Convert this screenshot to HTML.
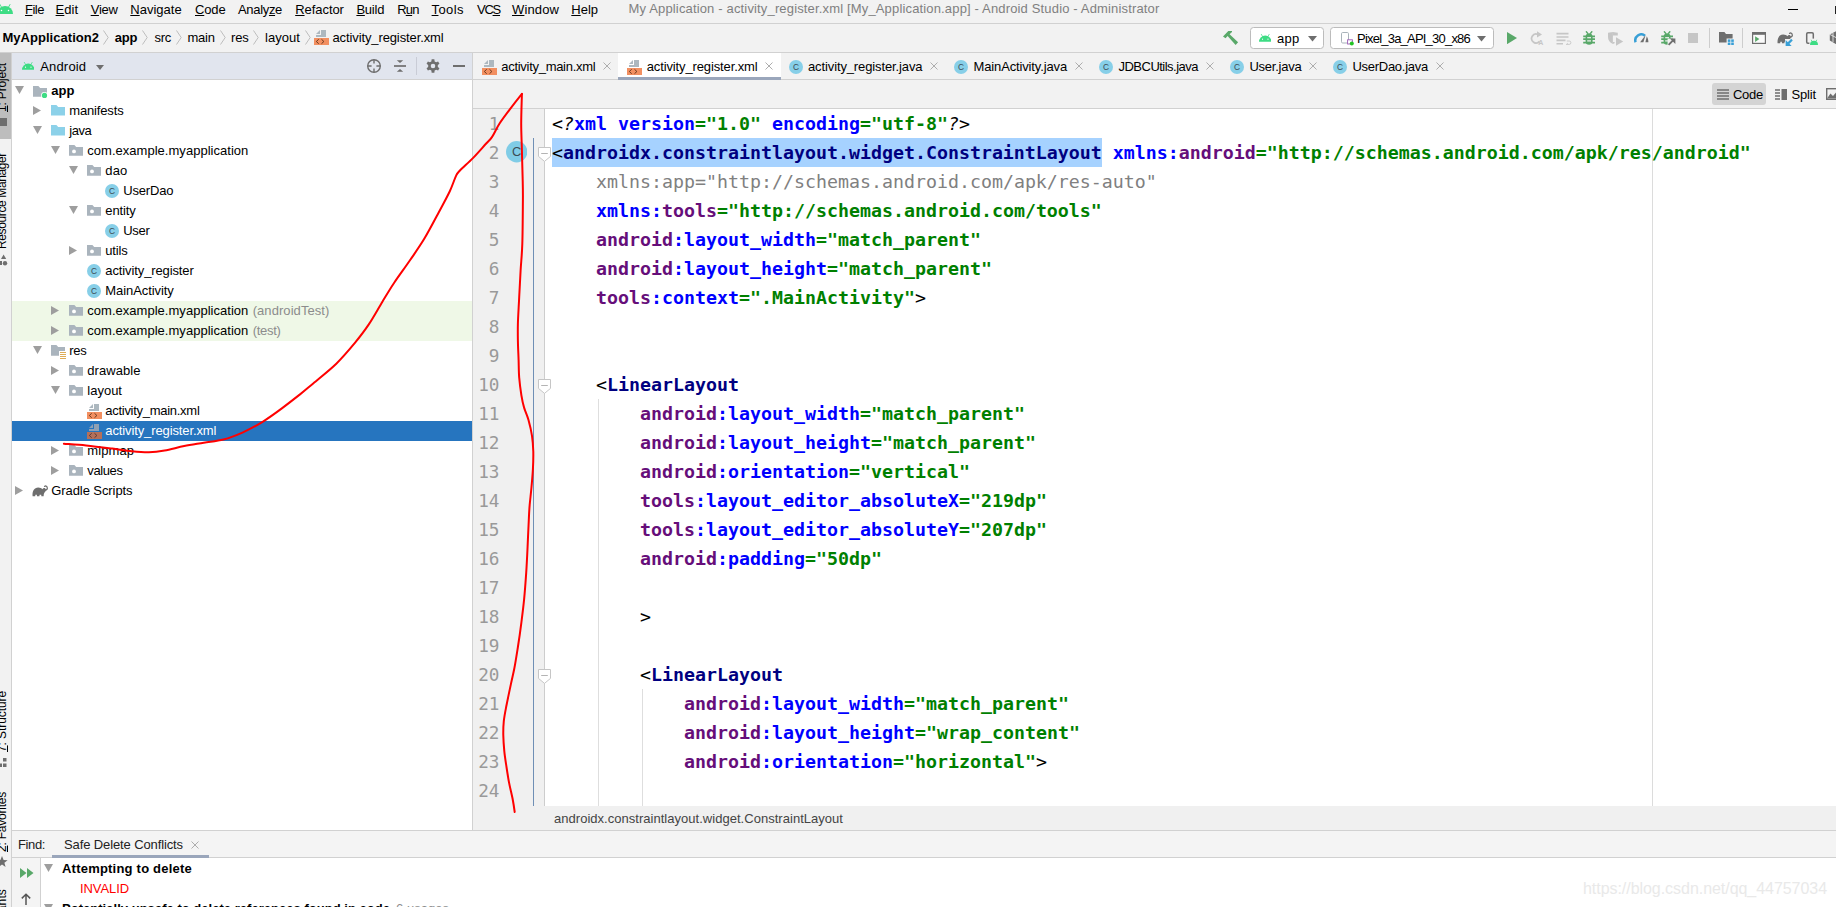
<!DOCTYPE html>
<html lang="en"><head><meta charset="utf-8"><title>Android Studio - activity_register.xml</title>
<style>
html,body{margin:0;padding:0;background:#fff;}
body{width:1836px;height:907px;overflow:hidden;}
#app{position:relative;width:1836px;height:907px;overflow:hidden;background:#fff;font-family:"Liberation Sans",sans-serif;font-size:13px;color:#000;}
#app>div,#app>svg,#app>span{position:absolute;}
.t{height:20px;line-height:20px;white-space:nowrap;}
u{text-decoration:underline;text-underline-offset:1px;}
.code{font-family:"DejaVu Sans Mono","Liberation Mono",monospace;font-size:18.27px;line-height:29px;height:29px;white-space:pre;left:552px;}
.code b{font-weight:bold;}
.ln{font-family:"DejaVu Sans Mono","Liberation Mono",monospace;font-size:17.7px;line-height:29px;height:29px;color:#999;width:26.5px;left:473px;text-align:right;margin-top:1px;}
.tn{color:#000080}.ns{color:#660e7a}.an{color:#0000ff}.sv{color:#008000}.gy{color:#808080;font-weight:normal}

</style></head>
<body>
<div id="app">
<div style="left:0px;top:0px;width:1836px;height:907px;background:#fff;"></div>
<div style="left:0px;top:0px;width:1836px;height:23px;background:#f2f2f2;"></div>
<div style="left:0px;top:23px;width:1836px;height:1px;background:#d1d1d1;"></div>
<div style="left:0px;top:24px;width:1836px;height:28px;background:#f2f2f2;"></div>
<div style="left:0px;top:52px;width:1836px;height:1px;background:#d1d1d1;"></div>
<div style="left:0px;top:53px;width:11px;height:854px;background:#f2f2f2;"></div>
<div style="left:0px;top:53px;width:11px;height:86px;background:#bdbdbd;"></div>
<div style="left:11px;top:53px;width:1px;height:854px;background:#d1d1d1;"></div>
<div style="left:12px;top:53px;width:460px;height:26px;background:#e1e5ee;"></div>
<div style="left:12px;top:79px;width:460px;height:1px;background:#d1d1d1;"></div>
<div style="left:472px;top:53px;width:1px;height:777px;background:#d1d1d1;"></div>
<div style="left:473px;top:53px;width:1363px;height:26px;background:#f2f2f2;"></div>
<div style="left:473px;top:79px;width:1363px;height:1px;background:#d1d1d1;"></div>
<div style="left:618px;top:53px;width:163px;height:26px;background:#fff;"></div>
<div style="left:618px;top:77px;width:163px;height:3px;background:#9aa6bb;"></div>
<div style="left:473px;top:80px;width:1363px;height:28px;background:#f2f2f2;"></div>
<div style="left:473px;top:108px;width:1363px;height:1px;background:#d1d1d1;"></div>
<div style="left:1712px;top:83px;width:54px;height:22px;background:#d4d4d4;border-radius:3px;"></div>
<div style="left:473px;top:109px;width:71px;height:697px;background:#f0f0f0;"></div>
<div style="left:533px;top:138px;width:1px;height:668px;background:#6f8fb5;"></div>
<div style="left:1652px;top:109px;width:1px;height:697px;background:#dcdcdc;"></div>
<div style="left:598px;top:399px;width:1px;height:407px;background:#dedede;"></div>
<div style="left:642px;top:689px;width:1px;height:117px;background:#dedede;"></div>
<div style="left:552px;top:138px;width:550px;height:29px;background:#a6d2ff;"></div>
<div style="left:473px;top:806px;width:1363px;height:24px;background:#f0f0f0;"></div>
<div style="left:12px;top:830px;width:1824px;height:1px;background:#d1d1d1;"></div>
<div style="left:12px;top:831px;width:1824px;height:26px;background:#f4f4f4;"></div>
<div style="left:12px;top:857px;width:1824px;height:1px;background:#d1d1d1;"></div>
<div style="left:52px;top:855px;width:157px;height:3px;background:#9aa6bb;"></div>
<div style="left:12px;top:858px;width:28px;height:49px;background:#f4f4f4;"></div>
<div style="left:40px;top:858px;width:1px;height:49px;background:#d1d1d1;"></div>
<div style="left:12px;top:301px;width:460px;height:40px;background:#eff8e7;"></div>
<div style="left:12px;top:421px;width:460px;height:20px;background:#2675bf;"></div>
<svg style="left:-3px;top:4.2px;" width="16" height="10.0" viewBox="0 0 16 10"><path d="M0 10 A8 8 0 0 1 16 10 Z" fill="#3ddc84"/><path d="M4.6 3.3 L3 0.5 M11.4 3.3 L13 0.5" stroke="#3ddc84" stroke-width="0.9" stroke-linecap="round" fill="none"/><circle cx="4.5" cy="6.6" r="0.75" fill="#fff"/><circle cx="11.5" cy="6.6" r="0.75" fill="#fff"/></svg>
<div style="left:1788px;top:9px;width:10px;height:1px;background:#000;"></div>
<div style="left:1834.5px;top:6px;width:1.5px;height:8px;background:#222;"></div>
<svg style="left:103px;top:30px;" width="6" height="15" viewBox="0 0 6 15"><path d="M0.5 0.5 L5.2 7.5 L0.5 14.5" stroke="#bdbdbd" stroke-width="1" fill="none"/></svg>
<svg style="left:142px;top:30px;" width="6" height="15" viewBox="0 0 6 15"><path d="M0.5 0.5 L5.2 7.5 L0.5 14.5" stroke="#bdbdbd" stroke-width="1" fill="none"/></svg>
<svg style="left:175.5px;top:30px;" width="6" height="15" viewBox="0 0 6 15"><path d="M0.5 0.5 L5.2 7.5 L0.5 14.5" stroke="#bdbdbd" stroke-width="1" fill="none"/></svg>
<svg style="left:219.5px;top:30px;" width="6" height="15" viewBox="0 0 6 15"><path d="M0.5 0.5 L5.2 7.5 L0.5 14.5" stroke="#bdbdbd" stroke-width="1" fill="none"/></svg>
<svg style="left:253px;top:30px;" width="6" height="15" viewBox="0 0 6 15"><path d="M0.5 0.5 L5.2 7.5 L0.5 14.5" stroke="#bdbdbd" stroke-width="1" fill="none"/></svg>
<svg style="left:304.5px;top:30px;" width="6" height="15" viewBox="0 0 6 15"><path d="M0.5 0.5 L5.2 7.5 L0.5 14.5" stroke="#bdbdbd" stroke-width="1" fill="none"/></svg>
<svg style="left:314px;top:30px;" width="15" height="15" viewBox="0 0 15 15"><path d="M7 0 H12 V7 H2 V5 H7 Z" fill="#adb8bf"/><path d="M2 4 L6 0 V4 Z" fill="#adb8bf"/><rect x="0" y="8" width="15" height="7" fill="#f28f60"/><path d="M4.7 9.3 L2.3 11.5 L4.7 13.7 M7.5 9.3 L9.9 11.5 L7.5 13.7" stroke="#6b3a20" stroke-width="1" fill="none"/></svg>
<svg style="left:1222px;top:30px;" width="18" height="16" viewBox="0 0 18 16"><path d="M1 6.5 L6.3 1.1 H10 V1.9 L7.6 4.2 L16.1 12.3 L13.6 15 L5.6 6.1 L3.5 8.3 Z" fill="#59a869"/></svg>
<div style="left:1250px;top:27px;width:72px;height:20px;background:#fff;border:1px solid #bcbcbc;border-radius:3.5px;"></div>
<svg style="left:1258.8px;top:34.2px;" width="12.5" height="7.81" viewBox="0 0 16 10"><path d="M0 10 A8 8 0 0 1 16 10 Z" fill="#3ddc84"/><path d="M4.6 3.3 L3 0.5 M11.4 3.3 L13 0.5" stroke="#3ddc84" stroke-width="0.9" stroke-linecap="round" fill="none"/><circle cx="4.5" cy="6.6" r="0.75" fill="#fff"/><circle cx="11.5" cy="6.6" r="0.75" fill="#fff"/></svg>
<svg style="left:1308px;top:36px;" width="9" height="6" viewBox="0 0 9 6"><path d="M0 0 H9 L4.5 5.6 Z" fill="#6e6e6e"/></svg>
<div style="left:1330px;top:27px;width:162px;height:20px;background:#fff;border:1px solid #bcbcbc;border-radius:3.5px;"></div>
<svg style="left:1341px;top:32px;" width="13" height="14" viewBox="0 0 13 14"><rect x="0.5" y="0.5" width="7" height="10.5" rx="1.2" fill="#fff" stroke="#a9b3ba" stroke-width="1"/><rect x="6.6" y="7.8" width="4.8" height="4.2" fill="#fff" stroke="#9b59b6" stroke-width="0.9"/><circle cx="10.8" cy="11.4" r="2" fill="#22c322"/></svg>
<svg style="left:1477px;top:36px;" width="9" height="6" viewBox="0 0 9 6"><path d="M0 0 H9 L4.5 5.6 Z" fill="#6e6e6e"/></svg>
<svg style="left:1507px;top:32px;" width="10" height="12" viewBox="0 0 10 12"><path d="M0 0 L10 6.1 L0 12.2 Z" fill="#59a869"/></svg>
<svg style="left:1530px;top:31px;" width="14" height="14" viewBox="0 0 14 14"><path d="M8 3.4 A4.5 4.5 0 1 0 9.6 10.4" stroke="#c6c6c6" stroke-width="1.7" fill="none"/><path d="M7 0.2 L12 3.4 L7 6.6 Z" fill="#c6c6c6"/><text x="8.2" y="13.8" font-family="Liberation Sans, sans-serif" font-size="7" font-weight="bold" fill="#c6c6c6">A</text></svg>
<svg style="left:1556px;top:32px;" width="16" height="13" viewBox="0 0 16 13"><path d="M0.5 1.6 H12.5 M0.5 5 H12.5 M0.5 8.4 H9.5 M0.5 11.8 H7" stroke="#c6c6c6" stroke-width="1.6"/><path d="M10.8 9 H13.2 A1.7 1.7 0 0 1 13.2 12.4 H10.6 M11.8 11.2 L10.4 12.4 L11.8 13.6" stroke="#c6c6c6" stroke-width="0.9" fill="none"/></svg>
<svg style="left:1583px;top:31px;" width="13" height="14" viewBox="0 0 13 14"><path d="M2.6 6 C2.6 3.3 4 2.2 6.1 2.2 C8.2 2.2 9.6 3.3 9.6 6 V10.2 A3.5 3.5 0 0 1 2.6 10.2 Z" fill="#59a869"/><path d="M3 0.3 L5 2.8 M9.2 0.3 L7.2 2.8" stroke="#59a869" stroke-width="1.4" fill="none"/><path d="M0.2 5.3 H12 M0.2 8.2 H12 M0.2 11.6 H12" stroke="#59a869" stroke-width="1.7" fill="none"/><rect x="4.2" y="6.1" width="3.8" height="1.2" fill="#f2f2f2"/><rect x="4.2" y="9.3" width="3.8" height="1.2" fill="#f2f2f2"/></svg>
<svg style="left:1608px;top:32px;" width="16" height="15" viewBox="0 0 16 15"><path d="M0 0.8 L4.9 0 V12 C1.6 10.4 0 8 0 5 Z" fill="#c6c6c6"/><path d="M4.9 0 L9.8 0.8 V3.4 H4.9 Z" fill="#c6c6c6"/><path d="M4.9 10 H6.6 V11.2 L4.9 12 Z" fill="#c6c6c6"/><path d="M8 5.2 L15.2 9.5 L8 13.8 Z" fill="#c6c6c6"/></svg>
<svg style="left:1633.7px;top:32.6px;" width="15" height="10" viewBox="0 0 15 10"><path d="M1.59 9.25 A6 6 0 0 1 10.99 2.67" stroke="#389fd6" stroke-width="2.5" fill="none"/><path d="M6.1 9.3 L11.6 1.9 L9.4 9.3 Z" fill="#6e6e6e"/><path d="M12.8 3.2 C13.8 5 14.4 7 14.4 9.3 H11.4 C11.8 7.4 12.2 5.4 12.8 3.2 Z" fill="#6e6e6e"/></svg>
<svg style="left:1661px;top:31px;" width="16" height="15" viewBox="0 0 16 15"><path d="M2.6 6 C2.6 3.3 4 2.2 6.1 2.2 C8.2 2.2 9.6 3.3 9.6 6 V10.2 A3.5 3.5 0 0 1 2.6 10.2 Z" fill="#59a869"/><path d="M3 0.3 L5 2.8 M9.2 0.3 L7.2 2.8" stroke="#59a869" stroke-width="1.4" fill="none"/><path d="M0.2 5.3 H12 M0.2 8.2 H12 M0.2 11.6 H12" stroke="#59a869" stroke-width="1.7" fill="none"/><rect x="4.2" y="6.1" width="3.8" height="1.2" fill="#f2f2f2"/><rect x="4.2" y="9.3" width="3.8" height="1.2" fill="#f2f2f2"/><rect x="6.6" y="7.6" width="9" height="8" fill="#f2f2f2"/><path d="M7.6 13.8 L13 8.4" stroke="#6e6e6e" stroke-width="1.9" fill="none"/><path d="M8.8 7.4 H14.4 V13 Z" fill="#6e6e6e"/></svg>
<div style="left:1688px;top:33px;width:10px;height:10px;background:#c6c6c6;"></div>
<div style="left:1709px;top:28px;width:1px;height:20px;background:#cdcdcd;"></div>
<svg style="left:1719px;top:32px;" width="15" height="13" viewBox="0 0 15 13"><path d="M0 0 H5.4 L7 2 H13.6 V6.4 H7.6 V10.4 H0 Z" fill="#6e6e6e"/><rect x="8.8" y="7.4" width="2.6" height="2.5" fill="#389fd6"/><rect x="12.2" y="7.4" width="2.6" height="2.5" fill="#389fd6"/><rect x="8.8" y="10.5" width="2.6" height="2.5" fill="#389fd6"/><rect x="12.2" y="10.5" width="2.6" height="2.5" fill="#389fd6"/></svg>
<div style="left:1742px;top:28px;width:1px;height:20px;background:#cdcdcd;"></div>
<svg style="left:1752px;top:32px;" width="14" height="12" viewBox="0 0 14 12"><rect x="0.6" y="0.6" width="12.8" height="10.8" fill="#fafafa" stroke="#6e6e6e" stroke-width="1.2"/><rect x="0" y="0" width="14" height="2.8" fill="#6e6e6e"/><path d="M3.1 4.2 L7.4 7.1 L3.1 10 Z" fill="#59a869"/></svg>
<svg style="left:1777.4px;top:32px;" width="16" height="14" viewBox="0 0 16 14"><path d="M0.6 11.3 C0 6.5 2.2 2.6 6.2 2.6 C8.2 2.6 9.6 3.4 10.4 4.2 C11 3.2 12.2 2.8 13.2 3.4 C14.2 4 14.2 5.6 13.4 6.6 C12.6 7.6 12 8.2 11.8 9.2 L11.6 11.3 H9.4 L9.2 9.8 H7.6 L7.4 11.3 H5 L4.8 9.8 H3.4 L3.2 11.3 Z" fill="#6e6e6e"/><path d="M13 5 C14.6 5.4 15.6 4 15.2 2.4 C14.9 1 13.4 0.6 12.6 1.4" stroke="#6e6e6e" stroke-width="1.3" fill="none" stroke-linecap="round"/><rect x="8" y="7" width="8" height="7" fill="#f2f2f2"/><path d="M8.6 14 V8 L14.6 14 Z" fill="#389fd6"/><path d="M15 7.6 L11 11.6" stroke="#389fd6" stroke-width="2.2" fill="none"/></svg>
<svg style="left:1805px;top:31px;" width="14" height="14" viewBox="0 0 14 14"><rect x="1.7" y="1.7" width="6.6" height="10.6" rx="1.2" fill="none" stroke="#6e6e6e" stroke-width="1.5"/><rect x="4.4" y="7.6" width="9.6" height="6.4" fill="#f2f2f2"/><path d="M5 13.9 A4 4.2 0 0 1 13 13.9 Z" fill="#3ddc84"/><path d="M7 10.4 L6.2 8.8 M11 10.4 L11.8 8.8" stroke="#3ddc84" stroke-width="0.8"/></svg>
<svg style="left:1829px;top:31px;" width="8" height="13" viewBox="0 0 8 13"><path d="M0.8 3.4 L7.5 0 V13.4 L0.8 9.6 Z" fill="#6e6e6e"/><path d="M0.8 3.4 L7.5 6.8 M4 2 V11" stroke="#f2f2f2" stroke-width="0.8"/></svg>
<div style="left:0px;top:118px;width:7px;height:8px;background:#6e6e6e;"></div>
<svg style="left:0px;top:254px;" width="8" height="12" viewBox="0 0 8 12"><path d="M1 5 L3.6 0.5 L6.2 5 Z" fill="#6e6e6e"/><rect x="-2" y="7" width="4" height="4" fill="#6e6e6e"/><circle cx="5" cy="9.2" r="2.2" fill="#6e6e6e"/></svg>
<svg style="left:0px;top:758px;" width="7" height="10" viewBox="0 0 7 10"><rect x="3" y="0" width="3.5" height="3.5" fill="#6e6e6e"/><rect x="-1" y="5.5" width="3" height="3.5" fill="#6e6e6e"/><rect x="3" y="5.5" width="3.5" height="3.5" fill="#6e6e6e"/></svg>
<svg style="left:0px;top:856px;" width="8" height="12" viewBox="0 0 8 12"><path d="M2 0 L3.6 4 L7.6 4.2 L4.4 6.8 L5.6 11 L2 8.6 L-1.6 11 L-0.4 6.8 L-3.6 4.2 L0.4 4 Z" fill="#6e6e6e"/></svg>
<svg style="left:21.8px;top:62px;" width="12.5" height="7.81" viewBox="0 0 16 10"><path d="M0 10 A8 8 0 0 1 16 10 Z" fill="#3ddc84"/><path d="M4.6 3.3 L3 0.5 M11.4 3.3 L13 0.5" stroke="#3ddc84" stroke-width="0.9" stroke-linecap="round" fill="none"/><circle cx="4.5" cy="6.6" r="0.75" fill="#fff"/><circle cx="11.5" cy="6.6" r="0.75" fill="#fff"/></svg>
<svg style="left:96px;top:65px;" width="8" height="5" viewBox="0 0 8 5"><path d="M0 0 H8 L4 5 Z" fill="#6e6e6e"/></svg>
<svg style="left:367px;top:59px;" width="14" height="14" viewBox="0 0 14 14"><circle cx="7" cy="7" r="6.3" fill="none" stroke="#6e6e6e" stroke-width="1.4"/><path d="M7 0.7 V4.6 M7 9.4 V13.3 M0.7 7 H4.6 M9.4 7 H13.3" stroke="#6e6e6e" stroke-width="1.4"/></svg>
<svg style="left:394px;top:60px;" width="12" height="12" viewBox="0 0 12 12"><path d="M0 6 H12" stroke="#6e6e6e" stroke-width="1.7"/><path d="M2.8 0.2 H9.2 L6 3 Z M2.8 11.8 H9.2 L6 9 Z" fill="#6e6e6e"/></svg>
<div style="left:416px;top:57px;width:1px;height:18px;background:#c9ccd6;"></div>
<svg style="left:426px;top:59px;" width="14" height="14" viewBox="0 0 14 14"><path d="M5.37 2.38 L5.65 0.34 L8.35 0.34 L8.63 2.38 L10.18 3.28 L12.10 2.50 L13.45 4.84 L11.82 6.11 L11.82 7.89 L13.45 9.16 L12.10 11.50 L10.18 10.72 L8.63 11.62 L8.35 13.66 L5.65 13.66 L5.37 11.62 L3.82 10.72 L1.90 11.50 L0.55 9.16 L2.18 7.89 L2.18 6.11 L0.55 4.84 L1.90 2.50 L3.82 3.28 Z M4.7 7 A2.3 2.3 0 1 0 9.3 7 A2.3 2.3 0 1 0 4.7 7 Z" fill="#6e6e6e" fill-rule="evenodd"/></svg>
<div style="left:453px;top:65px;width:12px;height:2px;background:#6e6e6e;"></div>
<svg style="left:15px;top:86.0px;" width="9" height="8" viewBox="0 0 9 8"><path d="M0 0 H9 L4.5 8 Z" fill="#9e9e9e"/></svg>
<svg style="left:33px;top:86.0px;" width="16" height="14" viewBox="0 0 16 14"><path d="M0 0 H5.4 L7.2 2 H14 V10.8 H0 Z" fill="#aab4bd"/><circle cx="11.5" cy="9.4" r="3.4" fill="#fff"/><circle cx="11.5" cy="9.4" r="2.6" fill="#3ddc84"/></svg>
<svg style="left:33px;top:106.0px;" width="8" height="9" viewBox="0 0 8 9"><path d="M0 0 V9 L8 4.5 Z" fill="#9e9e9e"/></svg>
<svg style="left:51px;top:105.2px;" width="14" height="11" viewBox="0 0 14 11"><path d="M0 0 H5.4 L7.2 2 H14 V10.6 H0 Z" fill="#8cd1e9"/></svg>
<svg style="left:33px;top:126.0px;" width="9" height="8" viewBox="0 0 9 8"><path d="M0 0 H9 L4.5 8 Z" fill="#9e9e9e"/></svg>
<svg style="left:51px;top:125.2px;" width="14" height="11" viewBox="0 0 14 11"><path d="M0 0 H5.4 L7.2 2 H14 V10.6 H0 Z" fill="#8cd1e9"/></svg>
<svg style="left:51px;top:146.0px;" width="9" height="8" viewBox="0 0 9 8"><path d="M0 0 H9 L4.5 8 Z" fill="#9e9e9e"/></svg>
<svg style="left:69px;top:145.1px;" width="14" height="11" viewBox="0 0 14 11"><path d="M0 0 H5.4 L7.2 2 H14 V10.8 H0 Z" fill="#aab4bd"/><circle cx="5" cy="6.4" r="1.9" fill="#fff"/></svg>
<svg style="left:69px;top:166.0px;" width="9" height="8" viewBox="0 0 9 8"><path d="M0 0 H9 L4.5 8 Z" fill="#9e9e9e"/></svg>
<svg style="left:87px;top:165.1px;" width="14" height="11" viewBox="0 0 14 11"><path d="M0 0 H5.4 L7.2 2 H14 V10.8 H0 Z" fill="#aab4bd"/><circle cx="5" cy="6.4" r="1.9" fill="#fff"/></svg>
<svg style="left:105.0px;top:183.5px;" width="14" height="14" viewBox="0 0 14 14"><circle cx="7.0" cy="7.0" r="7.0" fill="#87cfe8"/><text x="7.0" y="10.02" text-anchor="middle" font-family="Liberation Sans, sans-serif" font-size="8.4" fill="#3c4c55">C</text></svg>
<svg style="left:69px;top:206.0px;" width="9" height="8" viewBox="0 0 9 8"><path d="M0 0 H9 L4.5 8 Z" fill="#9e9e9e"/></svg>
<svg style="left:87px;top:205.1px;" width="14" height="11" viewBox="0 0 14 11"><path d="M0 0 H5.4 L7.2 2 H14 V10.8 H0 Z" fill="#aab4bd"/><circle cx="5" cy="6.4" r="1.9" fill="#fff"/></svg>
<svg style="left:105.0px;top:223.5px;" width="14" height="14" viewBox="0 0 14 14"><circle cx="7.0" cy="7.0" r="7.0" fill="#87cfe8"/><text x="7.0" y="10.02" text-anchor="middle" font-family="Liberation Sans, sans-serif" font-size="8.4" fill="#3c4c55">C</text></svg>
<svg style="left:69px;top:246.0px;" width="8" height="9" viewBox="0 0 8 9"><path d="M0 0 V9 L8 4.5 Z" fill="#9e9e9e"/></svg>
<svg style="left:87px;top:245.1px;" width="14" height="11" viewBox="0 0 14 11"><path d="M0 0 H5.4 L7.2 2 H14 V10.8 H0 Z" fill="#aab4bd"/><circle cx="5" cy="6.4" r="1.9" fill="#fff"/></svg>
<svg style="left:87.0px;top:263.5px;" width="14" height="14" viewBox="0 0 14 14"><circle cx="7.0" cy="7.0" r="7.0" fill="#87cfe8"/><text x="7.0" y="10.02" text-anchor="middle" font-family="Liberation Sans, sans-serif" font-size="8.4" fill="#3c4c55">C</text></svg>
<svg style="left:87.0px;top:283.5px;" width="14" height="14" viewBox="0 0 14 14"><circle cx="7.0" cy="7.0" r="7.0" fill="#87cfe8"/><text x="7.0" y="10.02" text-anchor="middle" font-family="Liberation Sans, sans-serif" font-size="8.4" fill="#3c4c55">C</text></svg>
<svg style="left:51px;top:306.0px;" width="8" height="9" viewBox="0 0 8 9"><path d="M0 0 V9 L8 4.5 Z" fill="#9e9e9e"/></svg>
<svg style="left:69px;top:305.1px;" width="14" height="11" viewBox="0 0 14 11"><path d="M0 0 H5.4 L7.2 2 H14 V10.8 H0 Z" fill="#aab4bd"/><circle cx="5" cy="6.4" r="1.9" fill="#fff"/></svg>
<svg style="left:51px;top:326.0px;" width="8" height="9" viewBox="0 0 8 9"><path d="M0 0 V9 L8 4.5 Z" fill="#9e9e9e"/></svg>
<svg style="left:69px;top:325.1px;" width="14" height="11" viewBox="0 0 14 11"><path d="M0 0 H5.4 L7.2 2 H14 V10.8 H0 Z" fill="#aab4bd"/><circle cx="5" cy="6.4" r="1.9" fill="#fff"/></svg>
<svg style="left:33px;top:346.0px;" width="9" height="8" viewBox="0 0 9 8"><path d="M0 0 H9 L4.5 8 Z" fill="#9e9e9e"/></svg>
<svg style="left:51px;top:345.3px;" width="16" height="15" viewBox="0 0 16 15"><path d="M0 0 H5.4 L7.2 2 H14 V10.8 H0 Z" fill="#aab4bd"/><rect x="8" y="6" width="8" height="9" fill="#fff"/><path d="M9 7.5 H15 M9 9.5 H15 M9 11.5 H15 M9 13.5 H15" stroke="#d9a343" stroke-width="0.9"/></svg>
<svg style="left:51px;top:366.0px;" width="8" height="9" viewBox="0 0 8 9"><path d="M0 0 V9 L8 4.5 Z" fill="#9e9e9e"/></svg>
<svg style="left:69px;top:365.1px;" width="14" height="11" viewBox="0 0 14 11"><path d="M0 0 H5.4 L7.2 2 H14 V10.8 H0 Z" fill="#aab4bd"/><circle cx="5" cy="6.4" r="1.9" fill="#fff"/></svg>
<svg style="left:51px;top:386.0px;" width="9" height="8" viewBox="0 0 9 8"><path d="M0 0 H9 L4.5 8 Z" fill="#9e9e9e"/></svg>
<svg style="left:69px;top:385.1px;" width="14" height="11" viewBox="0 0 14 11"><path d="M0 0 H5.4 L7.2 2 H14 V10.8 H0 Z" fill="#aab4bd"/><circle cx="5" cy="6.4" r="1.9" fill="#fff"/></svg>
<svg style="left:87px;top:404.0px;" width="15" height="15" viewBox="0 0 15 15"><path d="M7 0 H12 V7 H2 V5 H7 Z" fill="#adb8bf"/><path d="M2 4 L6 0 V4 Z" fill="#adb8bf"/><rect x="0" y="8" width="15" height="7" fill="#f28f60"/><path d="M4.7 9.3 L2.3 11.5 L4.7 13.7 M7.5 9.3 L9.9 11.5 L7.5 13.7" stroke="#6b3a20" stroke-width="1" fill="none"/></svg>
<svg style="left:87px;top:424.0px;" width="15" height="15" viewBox="0 0 15 15"><path d="M7 0 H12 V7 H2 V5 H7 Z" fill="#8fa0b4"/><path d="M2 4 L6 0 V4 Z" fill="#8fa0b4"/><rect x="0" y="8" width="15" height="7" fill="#b4705a"/><path d="M4.7 9.3 L2.3 11.5 L4.7 13.7 M7.5 9.3 L9.9 11.5 L7.5 13.7" stroke="#5b3a36" stroke-width="1" fill="none"/></svg>
<svg style="left:51px;top:446.0px;" width="8" height="9" viewBox="0 0 8 9"><path d="M0 0 V9 L8 4.5 Z" fill="#9e9e9e"/></svg>
<svg style="left:69px;top:445.1px;" width="14" height="11" viewBox="0 0 14 11"><path d="M0 0 H5.4 L7.2 2 H14 V10.8 H0 Z" fill="#aab4bd"/><circle cx="5" cy="6.4" r="1.9" fill="#fff"/></svg>
<svg style="left:51px;top:466.0px;" width="8" height="9" viewBox="0 0 8 9"><path d="M0 0 V9 L8 4.5 Z" fill="#9e9e9e"/></svg>
<svg style="left:69px;top:465.1px;" width="14" height="11" viewBox="0 0 14 11"><path d="M0 0 H5.4 L7.2 2 H14 V10.8 H0 Z" fill="#aab4bd"/><circle cx="5" cy="6.4" r="1.9" fill="#fff"/></svg>
<svg style="left:15px;top:486.0px;" width="8" height="9" viewBox="0 0 8 9"><path d="M0 0 V9 L8 4.5 Z" fill="#9e9e9e"/></svg>
<svg style="left:32px;top:484.5px;" width="16" height="12" viewBox="0 0 16 12"><path d="M0.6 11.3 C0 6.5 2.2 2.6 6.2 2.6 C8.2 2.6 9.6 3.4 10.4 4.2 C11 3.2 12.2 2.8 13.2 3.4 C14.2 4 14.2 5.6 13.4 6.6 C12.6 7.6 12 8.2 11.8 9.2 L11.6 11.3 H9.4 L9.2 9.8 H7.6 L7.4 11.3 H5 L4.8 9.8 H3.4 L3.2 11.3 Z" fill="#6e6e6e"/><path d="M13 5 C14.6 5.4 15.6 4 15.2 2.4 C14.9 1 13.4 0.6 12.6 1.4" stroke="#6e6e6e" stroke-width="1.3" fill="none" stroke-linecap="round"/></svg>
<svg style="left:482px;top:60px;" width="15" height="15" viewBox="0 0 15 15"><path d="M7 0 H12 V7 H2 V5 H7 Z" fill="#adb8bf"/><path d="M2 4 L6 0 V4 Z" fill="#adb8bf"/><rect x="0" y="8" width="15" height="7" fill="#f28f60"/><path d="M4.7 9.3 L2.3 11.5 L4.7 13.7 M7.5 9.3 L9.9 11.5 L7.5 13.7" stroke="#6b3a20" stroke-width="1" fill="none"/></svg>
<svg style="left:603px;top:62px;" width="8" height="8" viewBox="0 0 8 8"><path d="M0.5 0.5 L7.5 7.5 M7.5 0.5 L0.5 7.5" stroke="#adadad" stroke-width="1" fill="none"/></svg>
<svg style="left:627px;top:60px;" width="15" height="15" viewBox="0 0 15 15"><path d="M7 0 H12 V7 H2 V5 H7 Z" fill="#adb8bf"/><path d="M2 4 L6 0 V4 Z" fill="#adb8bf"/><rect x="0" y="8" width="15" height="7" fill="#f28f60"/><path d="M4.7 9.3 L2.3 11.5 L4.7 13.7 M7.5 9.3 L9.9 11.5 L7.5 13.7" stroke="#6b3a20" stroke-width="1" fill="none"/></svg>
<svg style="left:765px;top:62px;" width="8" height="8" viewBox="0 0 8 8"><path d="M0.5 0.5 L7.5 7.5 M7.5 0.5 L0.5 7.5" stroke="#adadad" stroke-width="1" fill="none"/></svg>
<svg style="left:789.0px;top:60.0px;" width="14" height="14" viewBox="0 0 14 14"><circle cx="7.0" cy="7.0" r="7.0" fill="#87cfe8"/><text x="7.0" y="10.02" text-anchor="middle" font-family="Liberation Sans, sans-serif" font-size="8.4" fill="#3c4c55">C</text></svg>
<svg style="left:930px;top:62px;" width="8" height="8" viewBox="0 0 8 8"><path d="M0.5 0.5 L7.5 7.5 M7.5 0.5 L0.5 7.5" stroke="#adadad" stroke-width="1" fill="none"/></svg>
<svg style="left:954.0px;top:60.0px;" width="14" height="14" viewBox="0 0 14 14"><circle cx="7.0" cy="7.0" r="7.0" fill="#87cfe8"/><text x="7.0" y="10.02" text-anchor="middle" font-family="Liberation Sans, sans-serif" font-size="8.4" fill="#3c4c55">C</text></svg>
<svg style="left:1075.2px;top:62px;" width="8" height="8" viewBox="0 0 8 8"><path d="M0.5 0.5 L7.5 7.5 M7.5 0.5 L0.5 7.5" stroke="#adadad" stroke-width="1" fill="none"/></svg>
<svg style="left:1099.0px;top:60.0px;" width="14" height="14" viewBox="0 0 14 14"><circle cx="7.0" cy="7.0" r="7.0" fill="#87cfe8"/><text x="7.0" y="10.02" text-anchor="middle" font-family="Liberation Sans, sans-serif" font-size="8.4" fill="#3c4c55">C</text></svg>
<svg style="left:1206px;top:62px;" width="8" height="8" viewBox="0 0 8 8"><path d="M0.5 0.5 L7.5 7.5 M7.5 0.5 L0.5 7.5" stroke="#adadad" stroke-width="1" fill="none"/></svg>
<svg style="left:1230.0px;top:60.0px;" width="14" height="14" viewBox="0 0 14 14"><circle cx="7.0" cy="7.0" r="7.0" fill="#87cfe8"/><text x="7.0" y="10.02" text-anchor="middle" font-family="Liberation Sans, sans-serif" font-size="8.4" fill="#3c4c55">C</text></svg>
<svg style="left:1309px;top:62px;" width="8" height="8" viewBox="0 0 8 8"><path d="M0.5 0.5 L7.5 7.5 M7.5 0.5 L0.5 7.5" stroke="#adadad" stroke-width="1" fill="none"/></svg>
<svg style="left:1333.0px;top:60.0px;" width="14" height="14" viewBox="0 0 14 14"><circle cx="7.0" cy="7.0" r="7.0" fill="#87cfe8"/><text x="7.0" y="10.02" text-anchor="middle" font-family="Liberation Sans, sans-serif" font-size="8.4" fill="#3c4c55">C</text></svg>
<svg style="left:1436px;top:62px;" width="8" height="8" viewBox="0 0 8 8"><path d="M0.5 0.5 L7.5 7.5 M7.5 0.5 L0.5 7.5" stroke="#adadad" stroke-width="1" fill="none"/></svg>
<svg style="left:1717px;top:89px;" width="12" height="11" viewBox="0 0 12 11"><path d="M0 1 H12 M0 4 H12 M0 7 H12 M0 10 H12" stroke="#6e6e6e" stroke-width="1.5"/></svg>
<svg style="left:1775px;top:89px;" width="12" height="11" viewBox="0 0 12 11"><path d="M0 1 H5 M0 4 H5 M0 7 H5 M0 10 H5" stroke="#6e6e6e" stroke-width="1.4"/><rect x="6.5" y="0" width="5.5" height="11" fill="#6e6e6e"/></svg>
<svg style="left:1826px;top:88px;" width="10" height="12" viewBox="0 0 10 12"><rect x="0.7" y="0.7" width="12" height="10.6" fill="none" stroke="#6e6e6e" stroke-width="1.4"/><path d="M1 10.5 L4.5 5.5 L7 8 L10 4.5 V10.5 Z" fill="#6e6e6e"/></svg>
<svg style="left:505.59999999999997px;top:141.3px;" width="21.4" height="21.4" viewBox="0 0 21.4 21.4"><circle cx="10.7" cy="10.7" r="10.7" fill="#80cce6"/><text x="10.7" y="15.32" text-anchor="middle" font-family="Liberation Sans, sans-serif" font-size="12.84" fill="#3c4c55">C</text></svg>
<div style="left:544px;top:109px;width:1px;height:697px;background:#cdcdcd;"></div>
<svg style="left:538.0px;top:147px;" width="13" height="15" viewBox="0 0 13 15"><path d="M0.5 0.5 H12.5 V9.4 L6.5 14.4 L0.5 9.4 Z" fill="#fff" stroke="#c6c6c6" stroke-width="1"/><path d="M3.2 6.5 H9.8" stroke="#b4b4b4" stroke-width="1"/></svg>
<svg style="left:538.0px;top:379px;" width="13" height="15" viewBox="0 0 13 15"><path d="M0.5 0.5 H12.5 V9.4 L6.5 14.4 L0.5 9.4 Z" fill="#fff" stroke="#c6c6c6" stroke-width="1"/><path d="M3.2 6.5 H9.8" stroke="#b4b4b4" stroke-width="1"/></svg>
<svg style="left:538.0px;top:669px;" width="13" height="15" viewBox="0 0 13 15"><path d="M0.5 0.5 H12.5 V9.4 L6.5 14.4 L0.5 9.4 Z" fill="#fff" stroke="#c6c6c6" stroke-width="1"/><path d="M3.2 6.5 H9.8" stroke="#b4b4b4" stroke-width="1"/></svg>
<svg style="left:190.5px;top:841px;" width="8" height="8" viewBox="0 0 8 8"><path d="M0.5 0.5 L7.5 7.5 M7.5 0.5 L0.5 7.5" stroke="#adadad" stroke-width="1" fill="none"/></svg>
<svg style="left:20px;top:868px;" width="14" height="10" viewBox="0 0 14 10"><path d="M0 0 L6.5 5 L0 10 Z M7 0 L13.5 5 L7 10 Z" fill="#59a869"/></svg>
<svg style="left:21px;top:893px;" width="10" height="12" viewBox="0 0 10 12"><path d="M5 12 V1.2 M0.8 5.4 L5 1.2 L9.2 5.4" stroke="#555" stroke-width="1.5" fill="none"/></svg>
<svg style="left:44px;top:864px;" width="9" height="8" viewBox="0 0 9 8"><path d="M0 0 H9 L4.5 8 Z" fill="#9e9e9e"/></svg>
<svg style="left:44px;top:904px;" width="9" height="8" viewBox="0 0 9 8"><path d="M0 0 H9 L4.5 8 Z" fill="#9e9e9e"/></svg>
<span class="t" style="left:25px;top:-0.5px;letter-spacing:-0.517px;"><u>F</u>ile</span>
<span class="t" style="left:55.6px;top:-0.5px;letter-spacing:0.048px;"><u>E</u>dit</span>
<span class="t" style="left:90.7px;top:-0.5px;letter-spacing:-0.213px;"><u>V</u>iew</span>
<span class="t" style="left:130.3px;top:-0.5px;letter-spacing:0.011px;"><u>N</u>avigate</span>
<span class="t" style="left:195px;top:-0.5px;letter-spacing:-0.123px;"><u>C</u>ode</span>
<span class="t" style="left:238px;top:-0.5px;letter-spacing:-0.324px;">Analy<u>z</u>e</span>
<span class="t" style="left:295.2px;top:-0.5px;letter-spacing:-0.055px;"><u>R</u>efactor</span>
<span class="t" style="left:356.4px;top:-0.5px;letter-spacing:-0.224px;"><u>B</u>uild</span>
<span class="t" style="left:397.2px;top:-0.5px;letter-spacing:-0.853px;">R<u>u</u>n</span>
<span class="t" style="left:431.6px;top:-0.5px;letter-spacing:0.368px;"><u>T</u>ools</span>
<span class="t" style="left:477px;top:-0.5px;letter-spacing:-1.245px;">VC<u>S</u></span>
<span class="t" style="left:512px;top:-0.5px;letter-spacing:0.125px;"><u>W</u>indow</span>
<span class="t" style="left:571.3px;top:-0.5px;letter-spacing:-0.013px;"><u>H</u>elp</span>
<span class="t" style="left:628.5px;top:-1.5px;color:#808080;letter-spacing:0.156px;">My Application - activity_register.xml [My_Application.app] - Android Studio - Administrator</span>
<span class="t" style="left:2.5px;top:27.5px;font-weight:bold;letter-spacing:0.030px;">MyApplication2</span>
<span class="t" style="left:114.8px;top:27.5px;font-weight:bold;letter-spacing:-0.208px;">app</span>
<span class="t" style="left:154.4px;top:27.5px;letter-spacing:-0.248px;">src</span>
<span class="t" style="left:187.4px;top:27.5px;letter-spacing:-0.197px;">main</span>
<span class="t" style="left:231px;top:27.5px;letter-spacing:-0.154px;">res</span>
<span class="t" style="left:265px;top:27.5px;letter-spacing:0.049px;">layout</span>
<span class="t" style="left:332.5px;top:27.5px;letter-spacing:-0.115px;">activity_register.xml</span>
<span class="t" style="left:1277px;top:28.5px;letter-spacing:0.266px;">app</span>
<span class="t" style="left:1357px;top:28.5px;letter-spacing:-0.786px;">Pixel_3a_API_30_x86</span>
<span class="t" style="left:-8px;top:111.5px;font-size:12px;letter-spacing:-0.170px;transform-origin:0 0;transform:rotate(-90deg);"><u>1</u>: Project</span>
<span class="t" style="left:-8px;top:248.5px;font-size:12px;letter-spacing:-0.379px;transform-origin:0 0;transform:rotate(-90deg);">Resource Manager</span>
<span class="t" style="left:-8px;top:752px;font-size:12px;letter-spacing:-0.087px;transform-origin:0 0;transform:rotate(-90deg);"><u>7</u>: Structure</span>
<span class="t" style="left:-8px;top:851.5px;font-size:12px;letter-spacing:-0.225px;transform-origin:0 0;transform:rotate(-90deg);"><u>2</u>: Favorites</span>
<span class="t" style="left:-8px;top:964px;font-size:12px;letter-spacing:0.132px;transform-origin:0 0;transform:rotate(-90deg);">Build Variants</span>
<span class="t" style="left:40.2px;top:57px;letter-spacing:0.184px;">Android</span>
<span class="t" style="left:51.3px;top:81.0px;font-weight:bold;letter-spacing:-0.042px;">app</span>
<span class="t" style="left:69.3px;top:101.0px;letter-spacing:-0.160px;">manifests</span>
<span class="t" style="left:69.3px;top:121.0px;letter-spacing:-0.465px;">java</span>
<span class="t" style="left:87.3px;top:141.0px;letter-spacing:0.024px;">com.example.myapplication</span>
<span class="t" style="left:105.3px;top:161.0px;letter-spacing:0.166px;">dao</span>
<span class="t" style="left:123.3px;top:181.0px;letter-spacing:-0.185px;">UserDao</span>
<span class="t" style="left:105.3px;top:201.0px;letter-spacing:-0.113px;">entity</span>
<span class="t" style="left:123.3px;top:221.0px;letter-spacing:-0.313px;">User</span>
<span class="t" style="left:105.3px;top:241.0px;letter-spacing:-0.185px;">utils</span>
<span class="t" style="left:105.3px;top:261.0px;letter-spacing:-0.112px;">activity_register</span>
<span class="t" style="left:105.3px;top:281.0px;letter-spacing:-0.072px;">MainActivity</span>
<span class="t" style="left:87.3px;top:301.0px;letter-spacing:0.024px;">com.example.myapplication</span>
<span class="t" style="left:252.7px;top:301.0px;color:#8c8c8c;letter-spacing:0.063px;">(androidTest)</span>
<span class="t" style="left:87.3px;top:321.0px;letter-spacing:0.024px;">com.example.myapplication</span>
<span class="t" style="left:252.7px;top:321.0px;color:#8c8c8c;letter-spacing:-0.304px;">(test)</span>
<span class="t" style="left:69.3px;top:341.0px;letter-spacing:-0.354px;">res</span>
<span class="t" style="left:87.3px;top:361.0px;letter-spacing:0.054px;">drawable</span>
<span class="t" style="left:87.3px;top:381.0px;letter-spacing:-0.001px;">layout</span>
<span class="t" style="left:105.3px;top:401.0px;letter-spacing:-0.281px;">activity_main.xml</span>
<span class="t" style="left:105.3px;top:421.0px;color:#fff;letter-spacing:-0.115px;">activity_register.xml</span>
<span class="t" style="left:87.3px;top:441.0px;letter-spacing:0.092px;">mipmap</span>
<span class="t" style="left:87.3px;top:461.0px;letter-spacing:-0.396px;">values</span>
<span class="t" style="left:51.3px;top:481.0px;letter-spacing:-0.084px;">Gradle Scripts</span>
<span class="t" style="left:501.3px;top:56.5px;letter-spacing:-0.292px;">activity_main.xml</span>
<span class="t" style="left:646.7px;top:56.5px;letter-spacing:-0.125px;">activity_register.xml</span>
<span class="t" style="left:808px;top:56.5px;letter-spacing:-0.121px;">activity_register.java</span>
<span class="t" style="left:973.5px;top:56.5px;letter-spacing:-0.138px;">MainActivity.java</span>
<span class="t" style="left:1118.5px;top:56.5px;letter-spacing:-0.513px;">JDBCUtils.java</span>
<span class="t" style="left:1249.4px;top:56.5px;letter-spacing:-0.234px;">User.java</span>
<span class="t" style="left:1352.4px;top:56.5px;letter-spacing:-0.264px;">UserDao.java</span>
<span class="t" style="left:1733px;top:85px;letter-spacing:-0.270px;">Code</span>
<span class="t" style="left:1791.4px;top:85px;letter-spacing:-0.139px;">Split</span>
<span class="t" style="left:554px;top:809px;color:#444;letter-spacing:0.028px;">androidx.constraintlayout.widget.ConstraintLayout</span>
<span class="t" style="left:18px;top:835px;color:#222;letter-spacing:-0.381px;">Find:</span>
<span class="t" style="left:64px;top:835px;color:#222;letter-spacing:-0.115px;">Safe Delete Conflicts</span>
<span class="t" style="left:62px;top:859px;font-weight:bold;letter-spacing:0.216px;">Attempting to delete</span>
<span class="t" style="left:80px;top:879px;color:#ff0000;letter-spacing:-0.087px;">INVALID</span>
<span class="t" style="left:62px;top:899px;font-weight:bold;letter-spacing:0.028px;">Potentially unsafe to delete references found in code</span>
<span class="t" style="left:396px;top:899px;color:#8c8c8c;letter-spacing:0.029px;">6 usages</span>
<span class="t" style="left:1583px;top:878.5px;font-size:16px;color:#e9e9e9;letter-spacing:-0.046px;">https://blog.csdn.net/qq_44757034</span>
<span class="ln" style="top:109px;">1</span>
<span class="code" style="top:109px;">&lt;<i>?</i><b class="an">xml version</b><b class="sv">=&quot;1.0&quot;</b><b class="an"> encoding</b><b class="sv">=&quot;utf-8&quot;</b><i>?</i>&gt;</span>
<span class="ln" style="top:138px;">2</span>
<span class="code" style="top:138px;">&lt;<b class="tn">androidx.constraintlayout.widget.ConstraintLayout</b> <b class="an">xmlns:</b><b class="ns">android</b><b class="sv">=&quot;http://schemas.android.com/apk/res/android&quot;</b></span>
<span class="ln" style="top:167px;">3</span>
<span class="code" style="top:167px;">    <span class="gy">xmlns:app=&quot;http://schemas.android.com/apk/res-auto&quot;</span></span>
<span class="ln" style="top:196px;">4</span>
<span class="code" style="top:196px;">    <b class="an">xmlns:</b><b class="ns">tools</b><b class="sv">=&quot;http://schemas.android.com/tools&quot;</b></span>
<span class="ln" style="top:225px;">5</span>
<span class="code" style="top:225px;">    <b class="ns">android</b><b class="an">:layout_width</b><b class="sv">=&quot;match_parent&quot;</b></span>
<span class="ln" style="top:254px;">6</span>
<span class="code" style="top:254px;">    <b class="ns">android</b><b class="an">:layout_height</b><b class="sv">=&quot;match_parent&quot;</b></span>
<span class="ln" style="top:283px;">7</span>
<span class="code" style="top:283px;">    <b class="ns">tools</b><b class="an">:context</b><b class="sv">=&quot;.MainActivity&quot;</b>&gt;</span>
<span class="ln" style="top:312px;">8</span>
<span class="ln" style="top:341px;">9</span>
<span class="ln" style="top:370px;">10</span>
<span class="code" style="top:370px;">    &lt;<b class="tn">LinearLayout</b></span>
<span class="ln" style="top:399px;">11</span>
<span class="code" style="top:399px;">        <b class="ns">android</b><b class="an">:layout_width</b><b class="sv">=&quot;match_parent&quot;</b></span>
<span class="ln" style="top:428px;">12</span>
<span class="code" style="top:428px;">        <b class="ns">android</b><b class="an">:layout_height</b><b class="sv">=&quot;match_parent&quot;</b></span>
<span class="ln" style="top:457px;">13</span>
<span class="code" style="top:457px;">        <b class="ns">android</b><b class="an">:orientation</b><b class="sv">=&quot;vertical&quot;</b></span>
<span class="ln" style="top:486px;">14</span>
<span class="code" style="top:486px;">        <b class="ns">tools</b><b class="an">:layout_editor_absoluteX</b><b class="sv">=&quot;219dp&quot;</b></span>
<span class="ln" style="top:515px;">15</span>
<span class="code" style="top:515px;">        <b class="ns">tools</b><b class="an">:layout_editor_absoluteY</b><b class="sv">=&quot;207dp&quot;</b></span>
<span class="ln" style="top:544px;">16</span>
<span class="code" style="top:544px;">        <b class="ns">android</b><b class="an">:padding</b><b class="sv">=&quot;50dp&quot;</b></span>
<span class="ln" style="top:573px;">17</span>
<span class="ln" style="top:602px;">18</span>
<span class="code" style="top:602px;">        &gt;</span>
<span class="ln" style="top:631px;">19</span>
<span class="ln" style="top:660px;">20</span>
<span class="code" style="top:660px;">        &lt;<b class="tn">LinearLayout</b></span>
<span class="ln" style="top:689px;">21</span>
<span class="code" style="top:689px;">            <b class="ns">android</b><b class="an">:layout_width</b><b class="sv">=&quot;match_parent&quot;</b></span>
<span class="ln" style="top:718px;">22</span>
<span class="code" style="top:718px;">            <b class="ns">android</b><b class="an">:layout_height</b><b class="sv">=&quot;wrap_content&quot;</b></span>
<span class="ln" style="top:747px;">23</span>
<span class="code" style="top:747px;">            <b class="ns">android</b><b class="an">:orientation</b><b class="sv">=&quot;horizontal&quot;</b>&gt;</span>
<span class="ln" style="top:776px;">24</span>
<svg style="left:0;top:0;pointer-events:none" width="1836" height="907" viewBox="0 0 1836 907"><path d="M63.9 443.7 C67.6 444.0 78.0 444.6 86.1 445.4 C94.2 446.2 104.7 447.6 112.3 448.6 C119.9 449.6 125.8 450.6 131.9 451.2 C138.0 451.8 143.5 452.3 148.9 452.2 C154.3 452.1 158.7 451.6 164.6 450.6 C170.5 449.6 177.7 447.3 184.2 446 C190.7 444.7 197.3 443.8 203.8 442.7 C210.3 441.6 216.9 441.2 223.4 439.5 C229.9 437.8 236.5 435.2 243 432.3 C249.5 429.4 256.1 425.8 262.6 421.8 C269.1 417.8 276.0 412.7 282.2 408.1 C288.4 403.5 294.8 398.5 300 394.4 C305.2 390.3 307.1 388.5 313.2 383.4 C319.2 378.3 329.4 370.4 336.3 363.7 C343.2 356.9 349.5 349.4 354.9 342.9 C360.3 336.3 364.2 331.3 368.8 324.4 C373.4 317.4 378.5 308.1 382.7 301.2 C386.9 294.2 389.6 289.6 394.2 282.7 C398.8 275.8 405.5 266.9 410.5 259.5 C415.5 252.2 419.8 246.3 424.4 238.6 C429.0 230.9 434.1 221.1 438.3 213.2 C442.5 205.3 446.9 197.3 449.8 191.2 C452.7 185.1 454.1 180.0 455.7 176.6 C457.3 173.2 456.8 173.8 459.7 170.7 C462.6 167.6 468.5 162.6 472.9 158.1 C477.3 153.6 483.0 147.0 486.2 143.5 C489.4 140.0 489.9 140.2 492.1 136.9 C494.3 133.6 496.4 128.3 499.4 123.7 C502.4 119.1 506.2 114.1 510 109.1 C513.8 104.1 519.9 96.4 521.9 93.9" stroke="#ff0000" stroke-width="2" fill="none" stroke-linecap="round"/><path d="M521.9 93.9 C521.8 98.9 521.2 114.3 521.2 123.7 C521.2 133.1 521.7 141.4 521.9 150.2 C522.1 159.0 522.4 168.3 522.6 176.6 C522.8 184.9 523.0 188.8 522.9 200 C522.8 211.2 522.7 232.2 522.3 244 C521.9 255.8 521.1 261.7 520.6 270.5 C520.1 279.3 519.7 288.2 519.2 297 C518.8 305.8 518.1 316.2 517.9 323.5 C517.7 330.8 517.8 334.9 517.9 341 C518.0 347.1 518.4 353.9 518.6 360 C518.8 366.1 518.7 371.7 519.2 377.6 C519.7 383.5 520.6 390.3 521.4 395.3 C522.2 400.3 522.9 403.5 524.1 407.6 C525.3 411.7 527.2 415.3 528.5 420 C529.8 424.7 531.2 430.5 532 435.8 C532.8 441.1 533.1 446.1 533.3 451.7 C533.4 457.3 533.2 463.4 532.9 469.3 C532.6 475.2 532.0 481.1 531.5 487 C531.0 492.9 530.2 499.1 529.7 504.6 C529.2 510.1 529.1 513.0 528.8 520 C528.4 527.0 528.0 537.7 527.6 546.5 C527.2 555.3 526.8 564.1 526.2 572.9 C525.6 581.7 524.9 591.2 524.1 599.4 C523.3 607.6 522.4 614.4 521.4 622.3 C520.4 630.2 519.1 639.4 517.9 647 C516.7 654.6 515.6 661.8 514.4 668 C513.2 674.2 512.2 677.9 510.9 684.1 C509.6 690.3 507.7 699.1 506.5 705.3 C505.3 711.5 504.3 716.2 503.8 721.2 C503.3 726.2 503.2 730.3 503.3 735.3 C503.4 740.3 503.8 745.8 504.3 751.1 C504.8 756.4 505.7 761.7 506.5 767 C507.3 772.3 508.1 777.6 509.1 782.9 C510.1 788.2 511.7 793.9 512.6 798.8 C513.5 803.6 514.4 809.8 514.7 812" stroke="#ff0000" stroke-width="2" fill="none" stroke-linecap="round"/></svg>
</div>
</body></html>
